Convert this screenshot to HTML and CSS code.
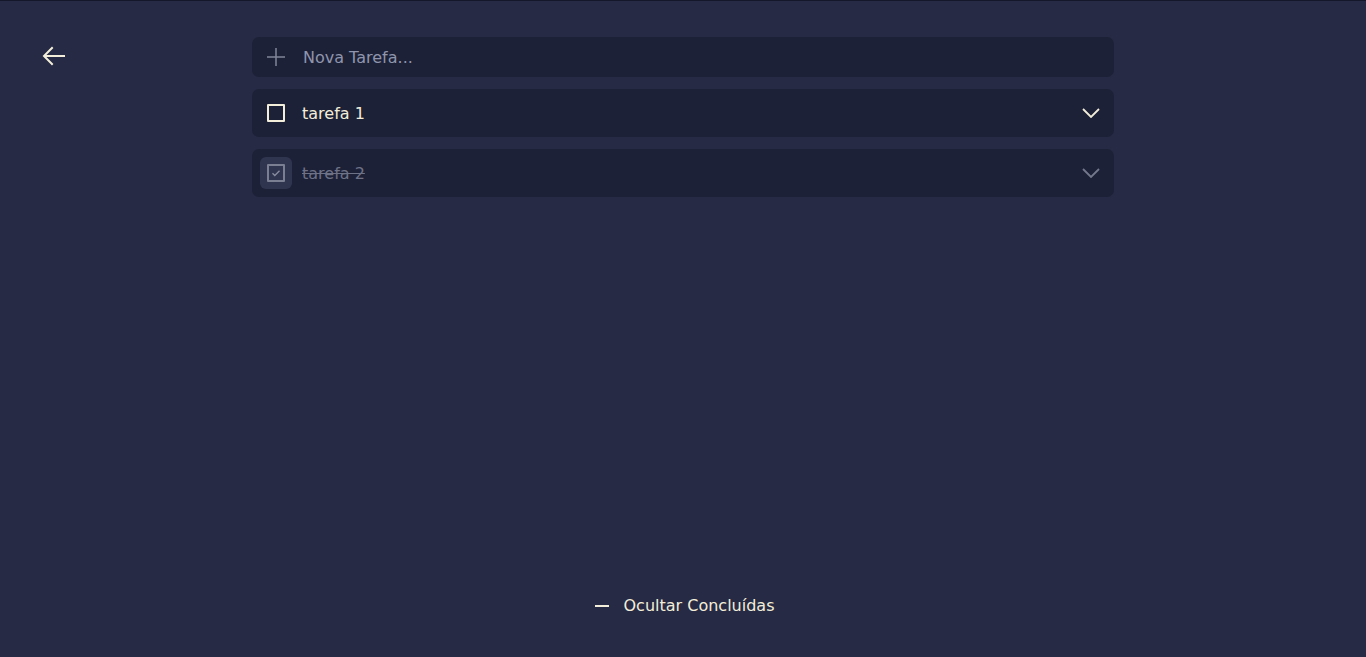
FILE: index.html
```html
<!DOCTYPE html>
<html lang="pt">
<head>
<meta charset="utf-8">
<title>Tarefas</title>
<link rel="stylesheet" href="styles.css">
</head>
<body>
<div class="page">
  <div class="side">
    <button class="back" aria-label="Voltar">
      <svg width="24" height="24" viewBox="0 0 24 24" fill="none" stroke="currentColor" stroke-width="2" stroke-linecap="square"><path d="M22 12H3M10 4l-8 8 8 8"/></svg>
    </button>
  </div>
  <main class="list">
    <div class="card new">
      <span class="plus">
        <svg width="18" height="18" viewBox="0 0 18 18" fill="none" stroke="currentColor" stroke-width="1.5"><path d="M9 0v18M0 9h18"/></svg>
      </span>
      <span class="placeholder">Nova Tarefa...</span>
    </div>
    <div class="card task">
      <span class="check"><span class="box"></span></span>
      <span class="label">tarefa 1</span>
      <span class="chev"><svg width="18" height="10" viewBox="0 0 18 10" fill="none" stroke="currentColor" stroke-width="1.8"><path d="M1 1l8 8 8-8"/></svg></span>
    </div>
    <div class="card task done">
      <span class="check hover"><span class="box">
        <svg width="12" height="12" viewBox="0 0 12 12" fill="none" stroke="currentColor" stroke-width="1.3"><path d="M2.5 6.2l2.3 2.3 4.7-4.7"/></svg>
      </span></span>
      <span class="label">tarefa 2</span>
      <span class="chev"><svg width="18" height="10" viewBox="0 0 18 10" fill="none" stroke="currentColor" stroke-width="1.8"><path d="M1 1l8 8 8-8"/></svg></span>
    </div>
  </main>
  <div class="side"></div>
  <footer class="foot">
    <button class="toggle"><span class="dash"></span>Ocultar Concluídas</button>
  </footer>
</div>
</body>
</html>
```
FILE: styles.css
```css
* { box-sizing: border-box; }
html, body { margin: 0; height: 100%; }
body {
  background: #262a44;
  border-top: 1px solid #14172a;
  font-family: "DejaVu Sans", "Noto Sans", sans-serif;
  color: #f3eed9;
  overflow: hidden;
}
.page {
  height: 100%;
  display: grid;
  grid-template-columns: 1fr 862px 1fr;
  grid-template-rows: 1fr auto;
}
.side { padding: 43px 0 0 42px; }
.back {
  background: none; border: 0; padding: 0; margin: 0;
  color: #f3eed9; display: block; cursor: pointer;
}
.back svg { display: block; }
.list {
  padding-top: 36px;
  display: flex; flex-direction: column; gap: 12px;
}
.card {
  background: #1d2137;
  border-radius: 7px;
  display: flex; align-items: center;
}
.new { height: 40px; padding-left: 15px; }
.plus { color: #80859a; display: flex; width: 18px; height: 18px; }
.placeholder { margin-left: 18px; font-size: 16px; color: #8f95ad; line-height: 20px; padding-top: 1px; }
.task { height: 48px; padding: 0 14px 0 8px; }
.check {
  width: 32px; height: 32px; border-radius: 6px;
  display: flex; align-items: center; justify-content: center;
}
.check.hover { background: #30354f; }
.box {
  width: 18px; height: 18px;
  border: 2px solid #f3eed9; border-radius: 1px;
  display: flex; align-items: center; justify-content: center;
}
.done .box { border-color: #7b7f92; color: #8a8ea1; }
.label { margin-left: 10px; font-size: 16px; flex: 1; line-height: 20px; padding-top: 1px; }
.done .label { color: #6e7287; text-decoration: line-through; }
.chev { color: #f3eed9; display: flex; }
.done .chev { color: #74788d; }
.foot {
  grid-column: 1 / 4;
  display: flex; justify-content: center;
  padding: 0 0 41px 3px;
}
.toggle {
  background: none; border: 0; padding: 0;
  font-family: inherit; font-size: 16px; color: #f3eed9;
  display: flex; align-items: center; gap: 15px; line-height: 20px;
}
.dash { width: 14px; height: 1.5px; background: #f3eed9; display: block; }
```
